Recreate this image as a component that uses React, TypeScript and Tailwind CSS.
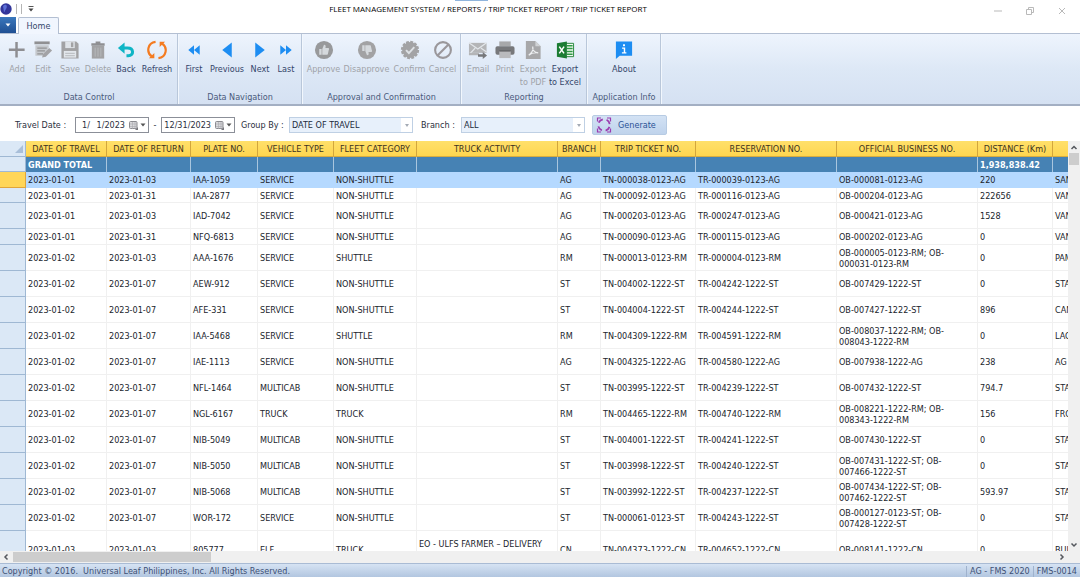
import type { ReactNode } from "react";

const ICON = "h-5 w-5 shrink-0";
const GREY = "#a2a2a4";

function Svg({ children }: { children: ReactNode }) {
  return (
    <svg viewBox="-0.5 -0.5 21 21" className={ICON} aria-hidden="true">
      {children}
    </svg>
  );
}

const icons: Record<string, ReactNode> = {
  add: <Svg><path d="M9.500 1.500V18M1.500 9.800H18" stroke="#8e8e92" strokeWidth="2.600" fill="none" /></Svg>,
  edit: (
    <Svg>
      <path d="M1 1H17V4H1Z" fill="#909092" />
      <path d="M2 5H16V8L10 16H2Z" fill="#c5c8cc" />
      <path d="M4 8H14M4 11H12M4 14H10" stroke="#929294" strokeWidth="1.300" />
      <path d="M9 18L10 14.500L16.500 8L19.500 10.500L13 17Z" fill="#a3a3a6" />
    </Svg>
  ),
  save: (
    <Svg>
      <path d="M1 1H16.500L19 3.500V19H1Z" fill={GREY} />
      <path d="M5 1H15V8H5Z" fill="#dfe3e8" />
      <path d="M11 2H13.500V7H11Z" fill={GREY} />
      <path d="M3.500 11H16.500V18H3.500Z" fill="#e2e6eb" />
      <path d="M5 13.500H15M5 16H15" stroke="#b4b7bb" />
    </Svg>
  ),
  delete: (
    <Svg>
      <path d="M3 3H7.500V1H12.500V3H17V5.500H3Z" fill="#8f8f92" />
      <path d="M3.500 5.500H16.500V19H3.500Z" fill={GREY} />
      <path d="M7 7.500V17M10 7.500V17M13 7.500V17" stroke="#b9bbbe" strokeWidth="0.900" />
    </Svg>
  ),
  back: (
    <Svg>
      <path d="M4.500 8H11.500C18.500 8 18.500 16 12.500 16H10.500" stroke="#0fb5c5" strokeWidth="3.200" fill="none" />
      <path d="M8.500 2V14L1.500 8Z" fill="#0fb5c5" />
    </Svg>
  ),
  refresh: (
    <Svg>
      <g fill="none" stroke="#f47b20" strokeWidth="2.300">
        <path d="M8.500 1.500C0 2.500 -1.500 12.500 4.500 16.800" />
        <path d="M11.500 18.500C20 17.500 21.500 7.500 15.500 3.200" />
      </g>
      <path d="M1.500 18.700H7.200V13.200Z M18.500 1.300H12.800V6.800Z" fill="#f47b20" />
    </Svg>
  ),
  first: <Svg><path d="M10 5V15L4 10Z M16 5V15L10 10Z" fill="#1d8df2" /></Svg>,
  previous: <Svg><path d="M15 2V18L5 10Z" fill="#1d8df2" /></Svg>,
  next: <Svg><path d="M5 2V18L15 10Z" fill="#1d8df2" /></Svg>,
  last: <Svg><path d="M4 5V15L10 10Z M10 5V15L16 10Z" fill="#1d8df2" /></Svg>,
  approve: (
    <Svg>
      <circle cx="10" cy="10" r="9.500" fill="#98999b" />
      <path d="M5 9H7.500V15H5Z M8.200 9L10 4.500C12 4.500 12 6 11.500 8H14.500C15.500 8 15.500 9.500 15 10L14 14.500C13.800 15 13 15 12.500 15H8.200Z" fill="#d5d9dd" />
    </Svg>
  ),
  disapprove: (
    <Svg>
      <circle cx="10" cy="10" r="9.500" fill="#a2a2a4" />
      <path d="M5 5H7.500V11H5Z M8.200 11L10 15.500C12 15.500 12 14 11.500 12H14.500C15.500 12 15.500 10.500 15 10L14 5.500C13.800 5 13 5 12.500 5H8.200Z" fill="#d5d9dd" />
    </Svg>
  ),
  confirm: (
    <Svg>
      <circle cx="10" cy="10" r="8.300" fill="#a3a3a5" />
      <circle cx="10" cy="10" r="8.500" fill="none" stroke="#a3a3a5" strokeWidth="2.200" strokeDasharray="3 1.450" />
      <path d="M5.800 10.200L8.800 13.200L14.500 7" stroke="#dde1e5" strokeWidth="2" fill="none" />
    </Svg>
  ),
  cancel: (
    <Svg>
      <circle cx="10" cy="10" r="8.300" fill="none" stroke="#9a979b" strokeWidth="2.200" />
      <path d="M4.200 15.800L15.800 4.200" stroke="#9a979b" strokeWidth="2.200" />
    </Svg>
  ),
  email: (
    <Svg>
      <path d="M0.500 2.500H19V13H0.500Z" fill="#b4b5b7" />
      <path d="M0.500 2.500L9.800 9L19 2.500M0.500 15L7 8M19 12L13 8" stroke="#e3e7eb" strokeWidth="1.300" fill="none" />
      <path d="M0.500 13H11V15.500H0.500Z" fill="#b4b5b7" />
      <path d="M10 14.500H15V12L19.500 15.800L15 19.500V17H10Z" fill="#77787b" />
    </Svg>
  ),
  print: (
    <Svg>
      <path d="M4 1H16V6H4Z" fill="#a7a8aa" />
      <rect x="0" y="6" width="20" height="9" rx="2" fill="#77787b" />
      <path d="M4 11H16V18.500H4Z" fill="#b9babd" />
      <path d="M4 11H16" stroke="#5f6063" strokeWidth="1.300" />
    </Svg>
  ),
  pdf: (
    <Svg>
      <path d="M2.500 0.500H12.500L18 6V19.500H2.500Z" fill="#a7a7a9" />
      <path d="M12.500 0.500V6H18Z" fill="#d0d2d5" />
      <path d="M5.500 15.500C9 13 10.500 9.500 9.700 6.500C9.300 10 11.500 12.500 15.500 13C11.500 12.500 8.500 13 5.500 15.500" stroke="#eceef0" strokeWidth="1.300" fill="none" />
    </Svg>
  ),
  excel: (
    <Svg>
      <path d="M9 3H19V17H9Z" fill="#f2f8f2" stroke="#24863a" />
      <path d="M12 5.500H18M12 8.500H18M12 11.500H18M12 14.500H18" stroke="#2f9a45" strokeWidth="1.600" />
      <path d="M1.500 3L12 1V19L1.500 17Z" fill="#1b7c33" />
      <path d="M4 6.500L9 13.500M9 6.500L4 13.500" stroke="#fff" strokeWidth="1.600" />
    </Svg>
  ),
  about: (
    <Svg>
      <path d="M1.500 1H18.500V16H5.500L1.500 19.500Z" fill="#1d8df2" />
      <path d="M8 8H10.500V12.500M7.800 13H12.500" stroke="#fff" strokeWidth="1.500" fill="none" />
      <rect x="9" y="4" width="2" height="2" fill="#fff" />
    </Svg>
  ),
};

type Tool = { icon: string; label: string; second?: string; width: string; off?: boolean };
const groups: { title: string; width: string; tools: Tool[] }[] = [
  {
    title: "Data Control",
    width: "w-[178px]",
    tools: [
      { icon: "add", label: "Add", width: "w-[26px]", off: true },
      { icon: "edit", label: "Edit", width: "w-[26px]", off: true },
      { icon: "save", label: "Save", width: "w-7", off: true },
      { icon: "delete", label: "Delete", width: "w-7", off: true },
      { icon: "back", label: "Back", width: "w-7" },
      { icon: "refresh", label: "Refresh", width: "w-[34px]" },
    ],
  },
  {
    title: "Data Navigation",
    width: "w-[124px]",
    tools: [
      { icon: "first", label: "First", width: "w-[26px]" },
      { icon: "previous", label: "Previous", width: "w-10" },
      { icon: "next", label: "Next", width: "w-[26px]" },
      { icon: "last", label: "Last", width: "w-[26px]" },
    ],
  },
  {
    title: "Approval and Confirmation",
    width: "w-[159px]",
    tools: [
      { icon: "approve", label: "Approve", width: "w-[36px]", off: true },
      { icon: "disapprove", label: "Disapprove", width: "w-[50px]", off: true },
      { icon: "confirm", label: "Confirm", width: "w-[36px]", off: true },
      { icon: "cancel", label: "Cancel", width: "w-[30px]", off: true },
    ],
  },
  {
    title: "Reporting",
    width: "w-[126px]",
    tools: [
      { icon: "email", label: "Email", width: "w-[26px]", off: true },
      { icon: "print", label: "Print", width: "w-7", off: true },
      { icon: "pdf", label: "Export", second: "to PDF", width: "w-7", off: true },
      { icon: "excel", label: "Export", second: "to Excel", width: "w-[36px]" },
    ],
  },
  { title: "Application Info", width: "w-[74px]", tools: [{ icon: "about", label: "About", width: "w-[36px]" }] },
];

const columns = [
  { name: "DATE OF TRAVEL", width: "w-[81px]" },
  { name: "DATE OF RETURN", width: "w-[84px]" },
  { name: "PLATE NO.", width: "w-[67px]" },
  { name: "VEHICLE TYPE", width: "w-[76px]" },
  { name: "FLEET CATEGORY", width: "w-[83px]" },
  { name: "TRUCK ACTIVITY", width: "w-[141px]" },
  { name: "BRANCH", width: "w-[43px]" },
  { name: "TRIP TICKET NO.", width: "w-[95px]" },
  { name: "RESERVATION NO.", width: "w-[141px]" },
  { name: "OFFICIAL BUSINESS NO.", width: "w-[141px]" },
  { name: "DISTANCE (Km)", width: "w-[75px]" },
  { name: "", width: "w-20" },
];

const rows: { h: string; cells: string[] }[] = [
  { h: "h-4", cells: ["2023-01-01", "2023-01-03", "IAA-1059", "SERVICE", "NON-SHUTTLE", "", "AG", "TN-000038-0123-AG", "TR-000039-0123-AG", "OB-000081-0123-AG", "220", "SAN"] },
  { h: "h-[15px]", cells: ["2023-01-01", "2023-01-31", "IAA-2877", "SERVICE", "NON-SHUTTLE", "", "AG", "TN-000092-0123-AG", "TR-000116-0123-AG", "OB-000204-0123-AG", "222656", "VAN"] },
  { h: "h-[26px]", cells: ["2023-01-01", "2023-01-03", "IAD-7042", "SERVICE", "NON-SHUTTLE", "", "AG", "TN-000203-0123-AG", "TR-000247-0123-AG", "OB-000421-0123-AG", "1528", "VAN"] },
  { h: "h-4", cells: ["2023-01-01", "2023-01-31", "NFQ-6813", "SERVICE", "NON-SHUTTLE", "", "AG", "TN-000090-0123-AG", "TR-000115-0123-AG", "OB-000202-0123-AG", "0", "VAN"] },
  { h: "h-[26px]", cells: ["2023-01-02", "2023-01-03", "AAA-1676", "SERVICE", "SHUTTLE", "", "RM", "TN-000013-0123-RM", "TR-000004-0123-RM", "OB-000005-0123-RM; OB-\n000031-0123-RM", "0", "PAM"] },
  { h: "h-[26px]", cells: ["2023-01-02", "2023-01-07", "AEW-912", "SERVICE", "NON-SHUTTLE", "", "ST", "TN-004002-1222-ST", "TR-004242-1222-ST", "OB-007429-1222-ST", "0", "STA"] },
  { h: "h-[26px]", cells: ["2023-01-02", "2023-01-07", "AFE-331", "SERVICE", "NON-SHUTTLE", "", "ST", "TN-004004-1222-ST", "TR-004244-1222-ST", "OB-007427-1222-ST", "896", "CAN"] },
  { h: "h-[26px]", cells: ["2023-01-02", "2023-01-07", "IAA-5468", "SERVICE", "SHUTTLE", "", "RM", "TN-004309-1222-RM", "TR-004591-1222-RM", "OB-008037-1222-RM; OB-\n008043-1222-RM", "0", "LAO"] },
  { h: "h-[26px]", cells: ["2023-01-02", "2023-01-07", "IAE-1113", "SERVICE", "NON-SHUTTLE", "", "AG", "TN-004325-1222-AG", "TR-004580-1222-AG", "OB-007938-1222-AG", "238", "AG"] },
  { h: "h-[26px]", cells: ["2023-01-02", "2023-01-07", "NFL-1464", "MULTICAB", "NON-SHUTTLE", "", "ST", "TN-003995-1222-ST", "TR-004239-1222-ST", "OB-007432-1222-ST", "794.7", "STA"] },
  { h: "h-[26px]", cells: ["2023-01-02", "2023-01-07", "NGL-6167", "TRUCK", "TRUCK", "", "RM", "TN-004465-1222-RM", "TR-004740-1222-RM", "OB-008221-1222-RM; OB-\n008343-1222-RM", "156", "FRO"] },
  { h: "h-[26px]", cells: ["2023-01-02", "2023-01-07", "NIB-5049", "MULTICAB", "NON-SHUTTLE", "", "ST", "TN-004001-1222-ST", "TR-004241-1222-ST", "OB-007430-1222-ST", "0", "STA"] },
  { h: "h-[26px]", cells: ["2023-01-02", "2023-01-07", "NIB-5050", "MULTICAB", "NON-SHUTTLE", "", "ST", "TN-003998-1222-ST", "TR-004240-1222-ST", "OB-007431-1222-ST; OB-\n007466-1222-ST", "0", "STA"] },
  { h: "h-[26px]", cells: ["2023-01-02", "2023-01-07", "NIB-5068", "MULTICAB", "NON-SHUTTLE", "", "ST", "TN-003992-1222-ST", "TR-004237-1222-ST", "OB-007434-1222-ST; OB-\n007462-1222-ST", "593.97", "STA"] },
  { h: "h-[26px]", cells: ["2023-01-02", "2023-01-07", "WOR-172", "SERVICE", "NON-SHUTTLE", "", "ST", "TN-000061-0123-ST", "TR-004243-1222-ST", "OB-000127-0123-ST; OB-\n007428-1222-ST", "0", "STA"] },
  { h: "h-[37px]", cells: ["2023-01-03", "2023-01-03", "805777", "ELF", "TRUCK", "EO - ULFS FARMER – DELIVERY\n ", "CN", "TN-004373-1222-CN", "TR-004652-1222-CN", "OB-008141-1222-CN", "0", "BUL"] },
];

function Ribbon() {
  return (
    <div className="flex h-[73px] shrink-0 border-t border-b-2 border-[#b3bfd2] border-b-[#a3afc3] bg-linear-to-b from-[#eef4fd] via-[#dde8f6] to-[#d5e1f2]">
      {groups.map((g) => (
        <section key={g.title} aria-label={g.title} className={`${g.width} flex shrink-0 flex-col border-r border-[#b9c7da] pl-px shadow-[1px_0_0_#f2f7fd]`}>
          <div className="flex flex-1 justify-center pt-1.5">
            {g.tools.map((t) => (
              <button
                key={t.icon}
                type="button"
                disabled={t.off}
                className={`${t.width} ${t.off ? "text-[#a0a3a8]" : "text-[#34466a]"} flex shrink-0 flex-col items-center whitespace-nowrap leading-[13px]`}
              >
                {icons[t.icon]}
                <span className="pt-[3px]">{t.label}</span>
                {t.second && <span>{t.second}</span>}
              </button>
            ))}
          </div>
          <h2 className="h-[13px] text-center leading-[13px] whitespace-nowrap text-[#4a5a7c]">{g.title}</h2>
        </section>
      ))}
    </div>
  );
}

function DateBox({ id, label, value }: { id: string; label: string; value: string }) {
  return (
    <div className="flex h-4 w-[74px] items-center border border-[#8b8f98] bg-white pl-px">
      <input id={id} aria-label={label} defaultValue={value} className="w-12 min-w-0 bg-transparent text-right outline-none" />
      <button type="button" aria-label={`Open ${label} calendar`} className="ml-1 flex items-center gap-0.5">
        <svg viewBox="0 0 9 9" className="h-[9px] w-[9px]">
          <rect x="0.500" y="0.500" width="7.500" height="7" rx="1" fill="#d9d9dc" stroke="#8b8b90" />
          <path d="M1 3H8M1 5.500H8M3.500 1V8M6 1V8" stroke="#a9a9ae" strokeWidth="0.600" />
          <path d="M6 9L9 6V9Z" fill="#77777c" />
        </svg>
        <svg viewBox="0 0 6 4" className="h-1 w-1.5"><path d="M0.500 0.500H5.500L3 3.500Z" fill="#555" /></svg>
      </button>
    </div>
  );
}

function Combo({ id, value }: { id: string; value: string }) {
  return (
    <div className="relative flex h-4 w-[124px] border border-[#bfd0e4] bg-[#e7f0fb]">
      <select id={id} defaultValue={value} className="w-full appearance-none bg-transparent pl-0.5 text-[#222b3c] outline-none">
        <option>{value}</option>
      </select>
      <span className="pointer-events-none absolute inset-y-0 right-0 flex w-[11px] items-center justify-center bg-white">
        <svg viewBox="0 0 4 3" className="h-[3px] w-1"><path d="M0 0H4L2 3Z" fill="#a4abb5" /></svg>
      </span>
    </div>
  );
}

function Filters() {
  return (
    <form className="flex h-[35px] shrink-0 items-center pt-[3px] pl-[15px] text-[#2b3040]" onSubmit={(e) => e.preventDefault()}>
      <label htmlFor="from" className="w-[60px] whitespace-nowrap">Travel Date :</label>
      <DateBox id="from" label="Start date" value={"1/\u2002 1/2023"} />
      <span className="w-3 text-center">-</span>
      <DateBox id="to" label="End date" value="12/31/2023" />
      <label htmlFor="group" className="w-[54px] pl-1.5 whitespace-nowrap">Group By :</label>
      <Combo id="group" value="DATE OF TRAVEL" />
      <label htmlFor="branch" className="w-12 pl-2 whitespace-nowrap">Branch :</label>
      <Combo id="branch" value="ALL" />
      <button type="submit" className="ml-[7px] flex h-5 w-[75px] items-center gap-1.5 rounded-xs border border-[#b7cbe3] bg-linear-to-b from-[#d3e2f4] to-[#bfd3ec] pl-[3px] text-[#2a5296]">
        <svg viewBox="0 0 16 16" className="h-4 w-4 shrink-0" fill="none" stroke="#9b3bb0">
          <circle cx="8" cy="8" r="5.800" strokeWidth="1.800" strokeDasharray="5.200 3.900" strokeDashoffset="-2" />
          <path d="M5 1H1.500V4.500M11 15H14.500V11.500M1.500 11.500V15H5M14.500 4.500V1H11" strokeWidth="1.200" />
        </svg>
        Generate
      </button>
    </form>
  );
}

function Grid() {
  return (
    <table className="w-[1133px] table-fixed border-separate border-spacing-0 text-left">
      <colgroup>
        <col className="w-[26px]" />
        {columns.map((c, i) => <col key={i} className={c.width} />)}
      </colgroup>
      <thead>
        <tr className="h-4">
          <th className="border-r border-b border-[#9fb8d3] bg-[#dbe8f6] p-0">
            <svg viewBox="0 0 8 8" className="mr-0.5 ml-auto h-2 w-2"><path d="M8 0V8H0Z" fill="#a9bfd9" /></svg>
          </th>
          {columns.map((c, i) => (
            <th key={i} scope="col" className="overflow-hidden border-r border-b border-r-[#d3a63c] border-b-[#d9ad3f] bg-linear-to-b from-[#ffe06a] to-[#ffd64f] p-0 pt-0.5 text-center font-normal whitespace-nowrap text-[#3b3220]">
              {c.name}
            </th>
          ))}
        </tr>
      </thead>
      <tbody>
        <tr className="h-[15px]">
          <th className="border-r border-b border-[#9fb8d3] bg-[#dbe8f6] p-0" />
          {columns.map((c, i) => (
            <td key={i} className="border-r border-[#a9c6de] bg-[#4682b4] p-0 pt-px pl-0.5 font-bold whitespace-nowrap text-white">
              {c.name === "DATE OF TRAVEL" ? "GRAND TOTAL" : c.name === "DISTANCE (Km)" ? "1,938,838.42" : ""}
            </td>
          ))}
        </tr>
        {rows.map((r, n) => (
          <tr key={n} className={`${r.h} ${n === 0 ? "bg-[#b5d9ff]" : "bg-white"}`}>
            <th className={`border-r border-b p-0 ${n === 0 ? "border-[#e0a53a] bg-[#ffd658]" : "border-[#9fb8d3] bg-[#dbe8f6]"}`} />
            {r.cells.map((v, i) => (
              <td key={i} className={`border-r border-b p-0 pt-0.5 pl-0.5 whitespace-pre ${n === 0 ? "border-[#b5d9ff]" : "border-[#f0f0f0]"}`}>
                {v}
              </td>
            ))}
          </tr>
        ))}
      </tbody>
    </table>
  );
}

function Arrow({ d }: { d: string }) {
  return (
    <svg viewBox="0 0 8 8" className="h-2 w-2 shrink-0" aria-hidden="true">
      <path d={d} fill="none" stroke="#55585e" strokeWidth="1.500" />
    </svg>
  );
}

export default function App() {
  return (
    <div className="flex h-screen flex-col overflow-hidden bg-white font-['DejaVu_Sans_Condensed','DejaVu_Sans',sans-serif] text-[9px] leading-[11px] text-[#20242c]">
      <header className="relative grid h-[17px] shrink-0 grid-cols-[1fr_auto_1fr] items-center">
        <span className="absolute top-0 left-[455px] h-px w-[33px] bg-[#8fb4dc]" />
        <div className="flex items-center gap-1">
          <svg viewBox="0 0 12 12" className="h-3 w-3"><circle cx="6" cy="6" r="5.700" fill="#31359a" /><path d="M3 3C6 0 8 3 6 6S5 9 4 9" fill="#5c6fd6" /></svg>
          <span className="h-2.5 w-1.5 border-x border-[#b5b5b5]" />
          <svg viewBox="0 0 6 6" className="ml-0.5 h-1.5 w-1.5"><path d="M0.500 0.500H5.500" stroke="#555" /><path d="M0.500 2.500H5.500L3 5.500Z" fill="#444" /></svg>
        </div>
        <h1 className="mr-26 font-['Open_Sans',sans-serif] text-[8px] whitespace-nowrap text-black">
          FLEET MANAGEMENT SYSTEM / REPORTS / TRIP TICKET REPORT / TRIP TICKET REPORT
        </h1>
        <div className="flex items-center justify-end gap-6 pt-1 pr-3.5">
          {["M0 4H8", "M0.500 2.500H5.500V7.500H0.500ZM2.500 2.500V0.500H7.500V5.500H5.500", "M1 1L7 7M7 1L1 7"].map((d, i) => (
            <button key={i} type="button" aria-label={["Minimize", "Restore", "Close"][i]}>
              <svg viewBox="0 0 8 8" className="h-2 w-2"><path d={d} fill="none" stroke="#b9b9b9" /></svg>
            </button>
          ))}
        </div>
      </header>
      <nav className="flex h-4 shrink-0 items-end">
        <button type="button" aria-label="Application menu" className="flex h-4 w-4 items-center justify-center bg-linear-to-b from-[#3a78bd] to-[#1f4f93]">
          <svg viewBox="0 0 6 4" className="h-1 w-1.5"><path d="M0.500 0.500H5.500L3 3.500Z" fill="#fff" /></svg>
        </button>
        <a href="#home" className="relative z-10 -mb-px ml-0.5 flex h-[17px] w-[41px] items-center justify-center rounded-t-xs border border-b-0 border-[#b3bfd2] bg-[#f1f6fe] text-[#34466a]">
          Home
        </a>
      </nav>
      <Ribbon />
      <Filters />
      <main className="flex min-h-0 flex-1">
        <div className="min-w-0 flex-1 overflow-hidden">
          <Grid />
        </div>
        <div className="flex w-3 shrink-0 flex-col items-center bg-[#f0f0f0] py-0.5">
          <Arrow d="M1.500 6L4 3.500L6.500 6" />
          <div className="mt-0.5 h-3 w-2.5 bg-[#cdcdcd]" />
          <div className="flex-1" />
          <Arrow d="M1.500 2.500L4 5L6.500 2.500" />
        </div>
      </main>
      <div className="flex h-3 shrink-0 items-center bg-[#f0f0f0] pr-3.5 pl-0.5">
        <Arrow d="M5.500 1.500L3 4L5.500 6.500" />
        <div className="ml-[3px] h-2.5 w-[198px] bg-[#cdcdcd]" />
        <div className="flex-1" />
        <Arrow d="M2.500 1.500L5 4L2.500 6.500" />
      </div>
      <footer className="flex h-[14px] shrink-0 items-center border-t border-[#a9bbd4] bg-linear-to-b from-[#d6e3f3] to-[#b2c6e0] pt-0.5 pl-0.5 text-[#3d5074]">
        <span className="flex-1 whitespace-pre">Copyright © 2016.  Universal Leaf Philippines, Inc. All Rights Reserved.</span>
        <span className="border-l border-[#9fb2cd] px-[3px]">AG - FMS 2020</span>
        <span className="border-l border-[#9fb2cd] px-[3px]">FMS-0014</span>
      </footer>
    </div>
  );
}
